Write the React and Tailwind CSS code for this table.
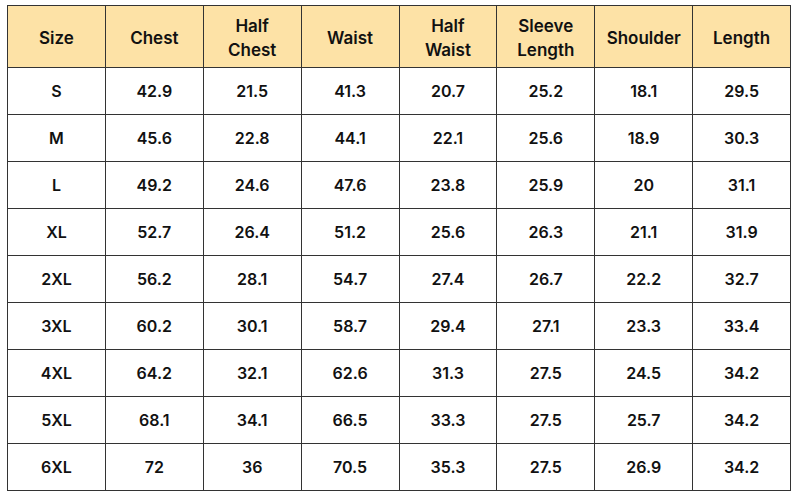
import React from "react";

const headers = [
  ["Size"],
  ["Chest"],
  ["Half", "Chest"],
  ["Waist"],
  ["Half", "Waist"],
  ["Sleeve", "Length"],
  ["Shoulder"],
  ["Length"],
];

const rows = [
  ["S", "42.9", "21.5", "41.3", "20.7", "25.2", "18.1", "29.5"],
  ["M", "45.6", "22.8", "44.1", "22.1", "25.6", "18.9", "30.3"],
  ["L", "49.2", "24.6", "47.6", "23.8", "25.9", "20", "31.1"],
  ["XL", "52.7", "26.4", "51.2", "25.6", "26.3", "21.1", "31.9"],
  ["2XL", "56.2", "28.1", "54.7", "27.4", "26.7", "22.2", "32.7"],
  ["3XL", "60.2", "30.1", "58.7", "29.4", "27.1", "23.3", "33.4"],
  ["4XL", "64.2", "32.1", "62.6", "31.3", "27.5", "24.5", "34.2"],
  ["5XL", "68.1", "34.1", "66.5", "33.3", "27.5", "25.7", "34.2"],
  ["6XL", "72", "36", "70.5", "35.3", "27.5", "26.9", "34.2"],
];

export default function App() {
  return (
    <div className="w-[800px] h-[500px] bg-white pt-[5px] pl-[7px]" style={{ fontFamily: "Inter, 'Open Sans', sans-serif" }}>
      <table className="border-collapse w-[784px] table-fixed text-[#111]">
        <thead>
          <tr className="h-[62px] bg-[#fde2a6]">
            {headers.map((h, i) => (
              <th key={i} className="border border-[#333] font-semibold text-[17px] leading-[24px] text-center align-middle p-0 pt-[2px]">
                {h.map((l, j) => (
                  <div key={j}>{l}</div>
                ))}
              </th>
            ))}
          </tr>
        </thead>
        <tbody>
          {rows.map((r, i) => (
            <tr key={i} className="h-[47px]">
              {r.map((c, j) => (
                <td key={j} className="border border-[#333] font-semibold text-[16px] text-center align-middle p-0">
                  {c}
                </td>
              ))}
            </tr>
          ))}
        </tbody>
      </table>
    </div>
  );
}
